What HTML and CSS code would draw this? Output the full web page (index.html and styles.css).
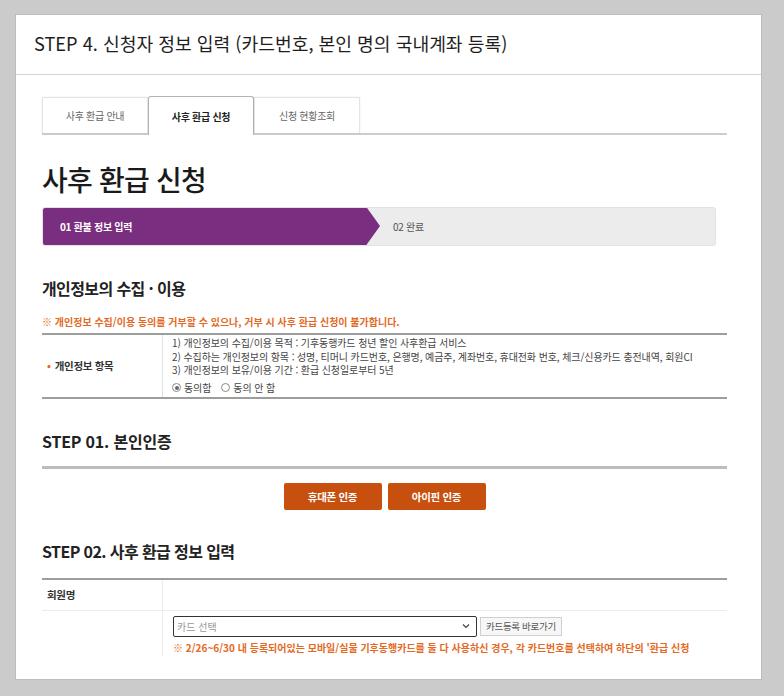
FILE: index.html
```html
<!DOCTYPE html>
<html lang="ko">
<head>
<meta charset="utf-8">
<title>STEP 4. 신청자 정보 입력</title>
<link rel="stylesheet" href="styles.css">
</head>
<body>
<div class="card">
  <div class="card-head">
    <h1 class="step-title">STEP 4. 신청자 정보 입력 (카드번호, 본인 명의 국내계좌 등록)</h1>
  </div>
  <div class="content">
    <div class="tabs">
      <div class="tab">사후 환급 안내</div>
      <div class="tab tab-active">사후 환급 신청</div>
      <div class="tab">신청 현황조회</div>
    </div>

    <h2 class="page-title">사후 환급 신청</h2>

    <div class="stepbar">
      <div class="step step-on">01 환불 정보 입력</div>
      <div class="step step-off">02 완료</div>
    </div>

    <h3 class="sec-title">개인정보의 수집 · 이용</h3>
    <p class="warn">※ 개인정보 수집/이용 동의를 거부할 수 있으나, 거부 시 사후 환급 신청이 불가합니다.</p>

    <div class="agree-table">
      <div class="agree-label"><span class="dot">•</span> 개인정보 항목</div>
      <div class="agree-body">
        <div class="line">1) 개인정보의 수집/이용 목적 : 기후동행카드 청년 할인 사후환급 서비스</div>
        <div class="line">2) 수집하는 개인정보의 항목 : 성명, 티머니 카드번호, 은행명, 예금주, 계좌번호, 휴대전화 번호, 체크/신용카드 충전내역, 회원CI</div>
        <div class="line">3) 개인정보의 보유/이용 기간 : 환급 신청일로부터 5년</div>
        <div class="radios">
          <span class="radio"><span class="rb rb-on"></span>동의함</span>
          <span class="radio"><span class="rb"></span>동의 안 함</span>
        </div>
      </div>
    </div>

    <h3 class="sec-title step01">STEP 01. 본인인증</h3>
    <div class="rule"></div>
    <div class="btns">
      <div class="btn">휴대폰 인증</div>
      <div class="btn">아이핀 인증</div>
    </div>

    <h3 class="sec-title step02">STEP 02. 사후 환급 정보 입력</h3>
    <div class="form-table">
      <div class="frow frow-first">
        <div class="flabel">회원명</div>
        <div class="fcell"></div>
      </div>
      <div class="frow">
        <div class="flabel"></div>
        <div class="fcell">
          <div class="select-line">
            <div class="select"><span class="ph">카드 선택</span>
              <svg class="chev" width="8" height="6" viewBox="0 0 8 6"><path d="M1 1.5 L4 4.5 L7 1.5" fill="none" stroke="#444" stroke-width="1.2"/></svg>
            </div>
            <div class="small-btn">카드등록 바로가기</div>
          </div>
          <div class="note">※ 2/26~6/30 내 등록되어있는 모바일/실물 기후동행카드를 둘 다 사용하신 경우, 각 카드번호를 선택하여 하단의 '환급 신청</div>
        </div>
      </div>
    </div>
  </div>
</div>
</body>
</html>
```

FILE: styles.css
```css
* { box-sizing: border-box; }
html, body { margin: 0; padding: 0; }
body {
  background: #cbcbcb;
  padding: 14px 22px 0 15px;
  font-family: "Noto Sans CJK KR", "Noto Sans", sans-serif;
  color: #222;
}
.card {
  width: 747px;
  height: 666px;
  background: #fff;
  border: 1px solid #bcbcbc;
  overflow: hidden;
}
.card-head {
  height: 60px;
  border-bottom: 1px solid #d4d4d4;
  padding: 16px 0 0 18px;
}
.step-title {
  margin: 0;
  font-size: 18.2px;
  line-height: 24px;
  font-weight: 400;
  color: #1e1e1e;
  letter-spacing: 0;
}
.content {
  padding: 0 0 0 26px;
  width: 711px;
}
.tabs {
  margin-top: 21px;
  display: flex;
  align-items: flex-end;
  border-bottom: 2px solid #cdcdcd;
}
.tab {
  width: 106px;
  height: 36px;
  border: 1px solid #e4e4e4;
  border-bottom: none;
  box-shadow: 0 0 2px rgba(0,0,0,0.08);
  background: #fff;
  font-size: 10px;
  line-height: 35px;
  text-align: center;
  color: #666;
  letter-spacing: -0.3px;
}
.tab-active {
  height: 39px;
  margin-bottom: -2px;
  border: 1px solid #b3b3b3;
  border-bottom: none;
  border-radius: 3px 3px 0 0;
  box-shadow: none;
  color: #222;
  font-weight: 700;
  line-height: 40px;
}
.page-title {
  margin: 27px 0 0 0;
  font-size: 28px;
  line-height: 34px;
  font-weight: 500;
  letter-spacing: -0.8px;
  color: #1a1a1a;
}
.stepbar {
  margin-top: 11px;
  width: 674px;
  height: 39px;
  background: #ececec;
  border: 1px solid #e2e2e2;
  border-radius: 3px;
  display: flex;
  align-items: center;
  overflow: hidden;
}
.step {
  font-size: 10px;
  letter-spacing: -0.3px;
}
.step-on {
  width: 338px;
  height: 39px;
  margin: -1px 0 0 -1px;
  background: #7a2e80;
  color: #fff;
  font-weight: 700;
  line-height: 39px;
  padding-left: 18px;
  clip-path: polygon(0 0, calc(100% - 14px) 0, 100% 50%, calc(100% - 14px) 100%, 0 100%);
}
.step-off {
  color: #555;
  padding-left: 13px;
}
.sec-title {
  margin: 31px 0 0 0;
  font-size: 16px;
  line-height: 22px;
  font-weight: 700;
  color: #222;
  letter-spacing: -0.6px;
}
.warn {
  margin: 15px 0 0 0;
  font-size: 10px;
  line-height: 16px;
  color: #e4691f;
  font-weight: 700;
  letter-spacing: 0;
}
.agree-table {
  margin-top: 3px;
  border-top: 2px solid #9d9d9d;
  border-bottom: 2px solid #9d9d9d;
  display: flex;
}
.agree-label {
  width: 121px;
  border-right: 1px solid #e2e2e2;
  display: flex;
  align-items: center;
  padding-left: 5px;
  font-size: 10.5px;
  font-weight: 700;
  color: #333;
  letter-spacing: -0.3px;
}
.dot { color: #e4691f; margin-right: 4px; }
.agree-body {
  flex: 1;
  padding: 1px 0 1px 9px;
  font-size: 10px;
  color: #444;
  letter-spacing: -0.1px;
}
.line { line-height: 13.5px; }
.radios {
  margin-top: 3px;
  line-height: 16px;
  display: flex;
  gap: 10px;
}
.radio { display: inline-flex; align-items: center; }
.rb {
  display: inline-block;
  width: 9px;
  height: 9px;
  border: 1px solid #888;
  border-radius: 50%;
  margin-right: 3px;
  position: relative;
}
.rb-on::after {
  content: "";
  position: absolute;
  left: 1.5px;
  top: 1.5px;
  width: 4px;
  height: 4px;
  border-radius: 50%;
  background: #666;
}
.step01 { margin-top: 31px; letter-spacing: -0.2px; }
.rule {
  margin-top: 14px;
  height: 3px;
  background: #bdbdbd;
}
.btns {
  margin-top: 14px;
  display: flex;
  justify-content: center;
  gap: 6px;
  width: 685px;
}
.btn {
  width: 98px;
  height: 27px;
  background: #c8500f;
  border-radius: 2px;
  color: #fff;
  font-size: 10.5px;
  font-weight: 700;
  line-height: 27px;
  text-align: center;
  letter-spacing: -0.3px;
}
.step02 { margin-top: 30px; }
.form-table {
  margin-top: 16px;
  border-top: 2px solid #9d9d9d;
}
.frow { display: flex; }
.frow-first { height: 31px; border-bottom: 1px solid #ececec; }
.flabel {
  width: 121px;
  border-right: 1px solid #ececec;
  padding-left: 5px;
  font-size: 10.5px;
  font-weight: 700;
  color: #333;
  line-height: 30px;
  letter-spacing: -0.3px;
}
.fcell {
  flex: 1;
  padding: 5px 0 0 10px;
}
.select-line { display: flex; align-items: center; gap: 3px; }
.select {
  width: 304px;
  height: 21px;
  border: 1.5px solid #333;
  border-radius: 2px;
  display: flex;
  align-items: center;
  justify-content: space-between;
  padding: 0 6px 0 3px;
  font-size: 10px;
  color: #999;
}
.small-btn {
  height: 19px;
  padding: 0 5px;
  border: 1px solid #cfcfcf;
  background: #f7f7f7;
  font-size: 9.5px;
  line-height: 17px;
  color: #555;
  letter-spacing: -0.3px;
}
.note {
  margin-top: 3px;
  font-size: 10px;
  line-height: 16px;
  color: #e4691f;
  font-weight: 700;
  letter-spacing: 0;
  white-space: nowrap;
}
```
